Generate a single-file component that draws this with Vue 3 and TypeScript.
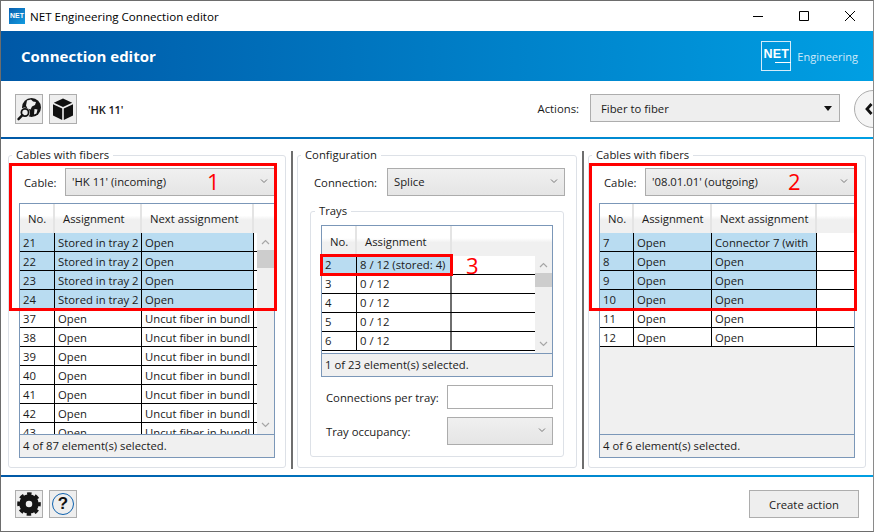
<template>
	<div class="window">
		<div class="titlebar">
			<div class="app-icon">NET</div>
			<span class="title-text">NET Engineering Connection editor</span>
			<div class="window-controls">
				<svg width="12" height="12" viewBox="0 0 12 12"><path d="M1 6.500h10" stroke="#000" fill="none" /></svg>
				<svg width="12" height="12" viewBox="0 0 12 12"><path d="M1.500 1.500h9v9h-9z" stroke="#000" fill="none" /></svg>
				<svg width="12" height="12" viewBox="0 0 12 12"><path d="M1 1l10 10M11 1L1 11" stroke="#000" fill="none" /></svg>
			</div>
		</div>

		<div class="banner">
			<h1 class="banner-title">Connection editor</h1>
			<div class="logo">
				<div class="logo-box">
					<span class="logo-net">NET</span>
				</div>
				<span class="logo-name">Engineering</span>
			</div>
		</div>

		<div class="toolbar">
			<button type="button" class="icon-button">
				<svg width="26" height="26" viewBox="0 0 26 26">
					<circle cx="15.500" cy="11.500" r="9.500" fill="#141414" />
					<path d="M11 4.500l4-1 2 2 3 .5-1 3-3 1.500-1.500 3-3-1-1.500-3z" fill="#efefef" />
					<path d="M18.500 13l3 .5-1 4-2.500 1z" fill="#efefef" />
					<circle cx="8.500" cy="17" r="5.500" fill="#efefef" />
					<circle cx="9" cy="16.500" r="3.600" fill="#efefef" stroke="#141414" stroke-width="1.800" />
					<path d="M6.400 19.200L2.500 23.200" stroke="#141414" stroke-width="2.400" stroke-linecap="round" />
				</svg>
			</button>
			<button type="button" class="icon-button">
				<svg width="24" height="24" viewBox="0 0 24 24">
					<path d="M12 1.500l9.200 4.200L12 10 2.800 5.700z" fill="#111" />
					<path d="M2 7.200l9.200 4.300V23L2 18.400z" fill="#111" />
					<path d="M22 7.200l-9.200 4.300V23L22 18.400z" fill="#111" />
				</svg>
			</button>
			<span class="object-name">'HK 11'</span>
			<div class="actions">
				<span>Actions:</span>
				<div class="actions-select">
					<span>Fiber to fiber</span>
					<svg width="8" height="5" viewBox="0 0 8 5"><path d="M0 0h8L4 5z" fill="#111" /></svg>
				</div>
			</div>
			<div class="collapse-button">
				<svg width="8" height="12" viewBox="0 0 8 12"><path d="M6.500 1L2 6l4.500 5" stroke="#111" stroke-width="2.800" fill="none" /></svg>
			</div>
		</div>

		<div class="rule"></div>

		<main class="panels">
			<fieldset class="group">
				<legend>Cables with fibers</legend>
				<div class="field-row">
					<label class="cable-label">Cable:</label>
					<div class="combo">
						<span>'HK 11' (incoming)</span>
						<svg width="8" height="5" viewBox="0 0 8 5"><path d="M1 .5L4 3.500 7 .5" stroke="#777" fill="none" /></svg>
					</div>
				</div>
				<div class="table">
					<div class="thead left-cols">
						<span>No.</span><span>Assignment</span><span>Next assignment</span><span></span>
					</div>
					<div class="tbody">
						<div class="rows">
							<div
								v-for="row in incomingRows"
								:key="row.no"
								class="row left-cols"
								:class="{ selected: row.selected }"
							>
								<span>{{ row.no }}</span><span>{{ row.assignment }}</span><span>{{ row.next }}</span><span class="filler"></span>
							</div>
						</div>
						<div class="scrollbar">
							<svg width="9" height="6" viewBox="0 0 9 6"><path d="M1 5l3.500-3.500L8 5" stroke="#a6a6a6" stroke-width="1.200" fill="none" /></svg>
							<div class="thumb thumb-left"></div>
							<svg class="scroll-down" width="9" height="6" viewBox="0 0 9 6"><path d="M1 1l3.500 3.500L8 1" stroke="#a6a6a6" stroke-width="1.200" fill="none" /></svg>
						</div>
					</div>
					<div class="status">4 of 87 element(s) selected.</div>
				</div>
			</fieldset>

			<div class="divider"></div>

			<fieldset class="group group-center">
				<legend>Configuration</legend>
				<div class="field-row">
					<label class="connection-label">Connection:</label>
					<div class="combo">
						<span>Splice</span>
						<svg width="8" height="5" viewBox="0 0 8 5"><path d="M1 .5L4 3.500 7 .5" stroke="#777" fill="none" /></svg>
					</div>
				</div>
				<fieldset class="group trays">
					<legend>Trays</legend>
					<div class="table">
						<div class="thead tray-cols">
							<span>No.</span><span>Assignment</span><span></span>
						</div>
						<div class="tbody">
							<div class="rows">
								<div
									v-for="row in trayRows"
									:key="row.no"
									class="row tray-cols"
								>
									<span :class="{ 'tray-selected': row.selected }">{{ row.no }}</span><span :class="{ 'tray-selected': row.selected }">{{ row.assignment }}</span><span></span>
								</div>
							</div>
							<div class="scrollbar">
								<svg width="9" height="6" viewBox="0 0 9 6"><path d="M1 5l3.500-3.500L8 5" stroke="#a6a6a6" stroke-width="1.200" fill="none" /></svg>
								<div class="thumb thumb-tray"></div>
								<svg class="scroll-down" width="9" height="6" viewBox="0 0 9 6"><path d="M1 1l3.500 3.500L8 1" stroke="#a6a6a6" stroke-width="1.200" fill="none" /></svg>
							</div>
						</div>
						<div class="status">1 of 23 element(s) selected.</div>
					</div>
					<div class="tray-field">
						<label>Connections per tray:</label>
						<div class="text-input"></div>
					</div>
					<div class="tray-field tray-field-combo">
						<label>Tray occupancy:</label>
						<div class="combo combo-small">
							<svg width="8" height="5" viewBox="0 0 8 5"><path d="M1 .5L4 3.500 7 .5" stroke="#777" fill="none" /></svg>
						</div>
					</div>
				</fieldset>
			</fieldset>

			<div class="divider"></div>

			<fieldset class="group">
				<legend>Cables with fibers</legend>
				<div class="field-row">
					<label class="cable-label">Cable:</label>
					<div class="combo">
						<span>'08.01.01' (outgoing)</span>
						<svg width="8" height="5" viewBox="0 0 8 5"><path d="M1 .5L4 3.500 7 .5" stroke="#777" fill="none" /></svg>
					</div>
				</div>
				<div class="table">
					<div class="thead right-cols">
						<span>No.</span><span>Assignment</span><span>Next assignment</span><span></span>
					</div>
					<div class="tbody tbody-empty">
						<div class="rows">
							<div
								v-for="row in outgoingRows"
								:key="row.no"
								class="row right-cols"
								:class="{ selected: row.selected }"
							>
								<span>{{ row.no }}</span><span>{{ row.assignment }}</span><span>{{ row.next }}</span><span class="blank"></span>
							</div>
						</div>
					</div>
					<div class="status">4 of 6 element(s) selected.</div>
				</div>
			</fieldset>
		</main>

		<div class="rule"></div>

		<div class="footer">
			<button type="button" class="icon-button">
				<svg width="24" height="24" viewBox="0 0 24 24">
					<circle cx="12" cy="12" r="6.500" fill="none" stroke="#141414" stroke-width="6.500" />
					<circle cx="12" cy="12" r="10" fill="none" stroke="#141414" stroke-width="3.600" stroke-dasharray="4.300 3.554" stroke-dashoffset="2.150" />
				</svg>
			</button>
			<button type="button" class="icon-button">
				<span class="help">?</span>
			</button>
			<button type="button" class="create-button">Create action</button>
		</div>

		<!-- red annotations drawn over the screenshot -->
		<div class="mark mark-left"></div>
		<div class="mark mark-right"></div>
		<div class="mark mark-tray"></div>
		<span class="mark-number number-1">1</span>
		<span class="mark-number number-2">2</span>
		<span class="mark-number number-3">3</span>
	</div>
</template>

<script setup lang="ts">
interface FiberRow {
	no: number;
	assignment: string;
	next?: string;
	selected?: boolean;
}

const stored = "Stored in tray 2";
const uncut = "Uncut fiber in bundl";

const incomingRows: FiberRow[] = [
	{no: 21, assignment: stored, next: "Open", selected: true},
	{no: 22, assignment: stored, next: "Open", selected: true},
	{no: 23, assignment: stored, next: "Open", selected: true},
	{no: 24, assignment: stored, next: "Open", selected: true},
	...[37, 38, 39, 40, 41, 42, 43].map((no) => ({no, assignment: "Open", next: uncut}))
];

const outgoingRows: FiberRow[] = [
	{no: 7, assignment: "Open", next: "Connector 7 (with", selected: true},
	{no: 8, assignment: "Open", next: "Open", selected: true},
	{no: 9, assignment: "Open", next: "Open", selected: true},
	{no: 10, assignment: "Open", next: "Open", selected: true},
	{no: 11, assignment: "Open", next: "Open"},
	{no: 12, assignment: "Open", next: "Open"}
];

const trayRows: FiberRow[] = [
	{no: 2, assignment: "8 / 12 (stored: 4)", selected: true},
	{no: 3, assignment: "0 / 12"},
	{no: 4, assignment: "0 / 12"},
	{no: 5, assignment: "0 / 12"},
	{no: 6, assignment: "0 / 12"}
];
</script>

<style>
html,
body {
	margin: 0;
	background: #fff;
}
</style>

<style scoped>
.window {
	position: relative;
	display: flex;
	flex-direction: column;
	box-sizing: border-box;
	width: 874px;
	height: 532px;
	overflow: hidden;
	background: #fff;
	border: 1px solid #6d6d6d;
	border-right-color: #8a8a8a;
	color: #1a1a1a;
	font-family: "Open Sans", "Noto Sans", sans-serif;
	font-size: 11.300px;
}

.titlebar {
	display: flex;
	align-items: center;
	flex: 0 0 30px;
	padding-left: 8px;
}

.app-icon {
	width: 16px;
	height: 16px;
	background: linear-gradient(135deg, #0a5fae, #119be0);
	color: #fff;
	font-family: "Liberation Sans", sans-serif;
	font-size: 7px;
	font-weight: 700;
	line-height: 16px;
	text-align: center;
}

.title-text {
	margin-left: 5px;
	color: #000;
	font-size: 11.600px;
}

.window-controls {
	display: flex;
	gap: 34px;
	margin-left: auto;
	margin-right: 17px;
}

.banner {
	display: flex;
	align-items: center;
	justify-content: space-between;
	flex: 0 0 50px;
	padding: 0 15px 0 20px;
	background: linear-gradient(90deg, #0058a6, #009fe3);
	color: #fff;
}

.banner-title {
	margin: 0;
	font-size: 15px;
	font-weight: 700;
}

.logo {
	display: flex;
	align-items: center;
	gap: 6px;
}

.logo-box {
	position: relative;
	box-sizing: border-box;
	width: 30px;
	height: 30px;
	border: 1px solid #d4ecfa;
	text-align: center;
}

.logo-box::after {
	content: "";
	position: absolute;
	left: 13px;
	right: -1px;
	top: 20px;
	height: 1px;
	background: #fff;
}

.logo-net {
	display: block;
	margin-top: 6px;
	font-family: "Liberation Sans", sans-serif;
	font-size: 12.500px;
	font-weight: 700;
	letter-spacing: 0.2px;
	line-height: 13px;
}

.logo-name {
	color: #cfe9f9;
	font-size: 11px;
}

.toolbar {
	position: relative;
	display: flex;
	align-items: center;
	flex: 0 0 56px;
	gap: 6px;
	padding-left: 14px;
}

.icon-button {
	display: flex;
	align-items: center;
	justify-content: center;
	box-sizing: border-box;
	width: 28px;
	height: 30px;
	margin: 0;
	padding: 0;
	background: #eee;
	border: 1px solid #adadad;
}

.object-name {
	margin-left: 5px;
	font-size: 11px;
	font-weight: 600;
	letter-spacing: -0.1px;
}

.actions {
	display: flex;
	align-items: center;
	gap: 11px;
	position: absolute;
	right: 33px;
	top: 13px;
}

.actions-select {
	display: flex;
	align-items: center;
	justify-content: space-between;
	box-sizing: border-box;
	width: 250px;
	height: 28px;
	padding: 0 7px 0 10px;
	background: #eee;
	border: 1px solid #adadad;
}

.collapse-button {
	position: absolute;
	top: 9px;
	left: 853px;
	display: flex;
	align-items: center;
	box-sizing: border-box;
	width: 38px;
	height: 38px;
	padding-left: 10px;
	background: #f5f5f5;
	border: 1px solid #adadad;
	border-radius: 50%;
}

.rule {
	flex: 0 0 2px;
	background: linear-gradient(90deg, #0058a6, #009fe3);
}

.panels {
	display: flex;
	flex: 1;
	min-height: 0;
	padding: 9px 0 7px 7px;
}

.group {
	display: flex;
	flex-direction: column;
	box-sizing: border-box;
	width: 278px;
	min-width: 0;
	margin: 0;
	padding: 6px 10px 9px;
	border: 1px solid #dde1e7;
	border-radius: 3px;
}

.group legend {
	margin-left: -7px;
	padding: 0 4px;
	line-height: 14px;
}

.group-center {
	width: 280px;
	padding: 6px 11px 10px;
}

.group-center > legend {
	margin-left: -8px;
}

.divider {
	flex: 0 0 2px;
	margin: 3px 4px -1px 5px;
	background: #6e6e6e;
}

.field-row {
	display: flex;
	align-items: center;
	flex: 0 0 28px;
	gap: 7px;
}

.cable-label {
	width: 34px;
	margin-left: 5px;
	flex: none;
	text-align: left;
}

.connection-label {
	width: 66px;
	margin-left: 5px;
	flex: none;
}

.combo {
	display: flex;
	align-items: center;
	justify-content: space-between;
	flex: 1;
	box-sizing: border-box;
	height: 28px;
	padding: 0 6px 1px 6px;
	background: linear-gradient(#f0f0f0, #e5e5e5);
	border: 1px solid #acacac;
}

.combo-small {
	justify-content: flex-end;
}

.table {
	display: flex;
	flex-direction: column;
	flex: 1;
	box-sizing: border-box;
	min-height: 0;
	margin-top: 7px;
	border: 1px solid #7b97b8;
}

.thead {
	flex: 0 0 29px;
	background: linear-gradient(#fff 40%, #f0f0f0 55%, #f0f0f0);
}

.thead span {
	display: flex;
	align-items: center;
	padding-left: 8px;
	border-right: 2px solid #e4e4e4;
	overflow: hidden;
	white-space: nowrap;
}

.thead span:last-child {
	border-right: 0;
}

.left-cols {
	display: grid;
	grid-template-columns: 35px 87px 112px 3px;
}

.right-cols {
	display: grid;
	grid-template-columns: 34px 78px 105px 37px;
}

.tray-cols {
	display: grid;
	grid-template-columns: 35px 95px 85px;
}

.tbody {
	display: flex;
	flex: 1;
	min-height: 0;
	overflow: hidden;
}

.tbody-empty {
	background: #f0f0f0;
}

.rows {
	flex: 1;
	min-width: 0;
}

.row {
	height: 19px;
	box-sizing: border-box;
	background: #fff;
	border-bottom: 1px solid #000;
}

.row span {
	box-sizing: border-box;
	height: 18px;
	padding-left: 3px;
	border-right: 1px solid #000;
	overflow: hidden;
	line-height: 20px;
	white-space: nowrap;
}

.row span:last-child {
	border-right: 0;
}

.row .filler {
	padding: 0;
}

.right-cols.selected {
	background: linear-gradient(90deg, #b9dcf1 217px, #fff 217px);
}

.left-cols.selected {
	background: linear-gradient(90deg, #b9dcf1 234px, #fff 234px);
}

.row.tray-cols span {
	line-height: 18px;
}

.row.tray-cols span:nth-child(2) {
	border-right: 2px solid #6e6e6e;
}

.tray-selected {
	background: #b9dcf1;
}

.scrollbar {
	position: relative;
	display: flex;
	flex-direction: column;
	align-items: center;
	flex: 0 0 17px;
	padding-top: 6px;
	box-sizing: border-box;
	background: #f0f0f0;
}

.thumb {
	position: absolute;
	left: 0;
	width: 17px;
	background: #cdcdcd;
}

.thumb-left {
	top: 17px;
	height: 18px;
}

.thumb-tray {
	top: 17px;
	height: 14px;
}

.scroll-down {
	position: absolute;
	bottom: 6px;
}

.status {
	flex: 0 0 22px;
	padding-left: 3px;
	background: #f0f0f0;
	border-top: 1px solid #7b97b8;
	line-height: 21px;
}

.trays {
	flex: 1;
	width: auto;
	margin: 8px 1px 0 1px;
	padding: 0 10px 10px;
}

.trays > legend {
	margin-left: -6px;
}

.trays .table {
	flex: 0 0 152px;
	margin-top: 7px;
}

.trays .thead {
	flex-basis: 30px;
}

.tray-field {
	display: flex;
	align-items: center;
	justify-content: space-between;
	height: 24px;
	margin-top: 8px;
	padding-left: 5px;
}

.tray-field-combo {
	height: 28px;
}

.text-input {
	box-sizing: border-box;
	width: 106px;
	height: 24px;
	background: #fff;
	border: 1px solid #acacac;
}

.tray-field .combo {
	flex: 0 0 106px;
}

.footer {
	display: flex;
	align-items: center;
	flex: 0 0 54px;
	gap: 6px;
	padding: 0 14px;
}

.footer .icon-button {
	height: 28px;
}

.help {
	display: block;
	box-sizing: border-box;
	width: 22px;
	height: 22px;
	border: 1.500px solid #0f62ae;
	border-radius: 50%;
	color: #111;
	font-family: "Liberation Sans", sans-serif;
	font-size: 17px;
	font-weight: 700;
	line-height: 19px;
	text-align: center;
}

.create-button {
	box-sizing: border-box;
	width: 110px;
	height: 28px;
	margin-left: auto;
	padding: 0;
	background: #eee;
	border: 1px solid #adadad;
	color: #1a1a1a;
	font: inherit;
}

.mark {
	position: absolute;
	box-sizing: border-box;
	border: 3px solid #f00;
}

.mark-left {
	left: 8px;
	top: 162px;
	width: 268px;
	height: 148px;
}

.mark-right {
	left: 588px;
	top: 162px;
	width: 268px;
	height: 148px;
}

.mark-tray {
	left: 319px;
	top: 253px;
	width: 133px;
	height: 22px;
}

.mark-number {
	position: absolute;
	color: #f00;
	font-family: "Open Sans", sans-serif;
	font-size: 22px;
	line-height: 24px;
}

.number-1 {
	left: 206px;
	top: 168px;
}

.number-2 {
	left: 787px;
	top: 168px;
}

.number-3 {
	left: 465px;
	top: 252px;
}
</style>
